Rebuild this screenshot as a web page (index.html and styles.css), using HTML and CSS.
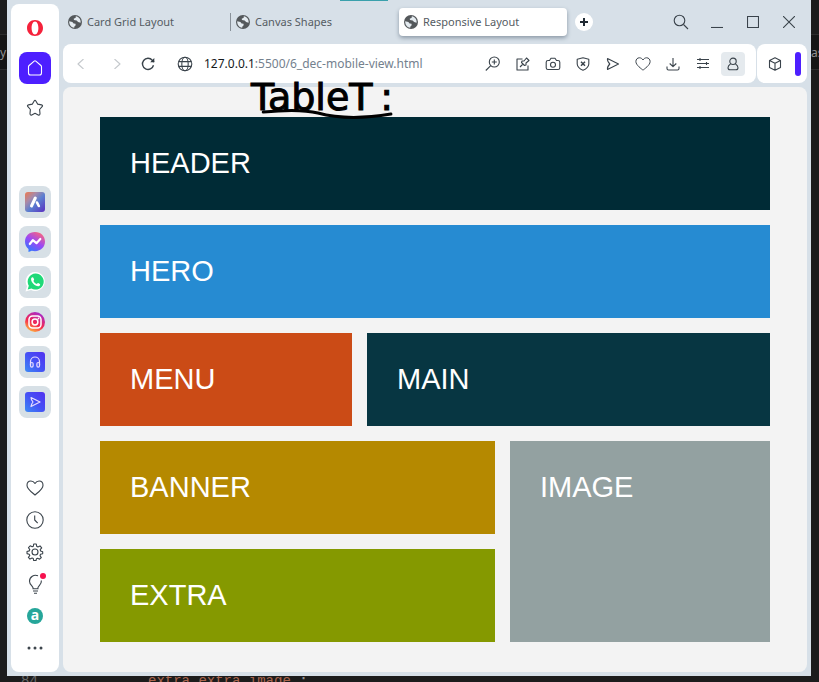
FILE: index.html
```html
<!DOCTYPE html>
<html lang="en">
<head>
<meta charset="utf-8">
<meta name="viewport" content="width=device-width, initial-scale=1">
<title>Responsive Layout</title>
<link rel="stylesheet" href="styles.css">
</head>
<body>
<svg class="defs" aria-hidden="true">
  <defs>
    <linearGradient id="g-aria" x1="0" y1="0" x2="1" y2="1"><stop offset="0" stop-color="#f0784a"/><stop offset=".3" stop-color="#a98aa8"/><stop offset=".55" stop-color="#5b7fd0"/><stop offset="1" stop-color="#5a2fc0"/></linearGradient>
    <linearGradient id="g-msg" x1=".2" y1="1" x2=".8" y2="0"><stop offset="0" stop-color="#2a7cff"/><stop offset=".5" stop-color="#9a48f5"/><stop offset="1" stop-color="#ff6678"/></linearGradient>
    <linearGradient id="g-ig" x1=".2" y1="1" x2=".7" y2="0"><stop offset="0" stop-color="#ffc23c"/><stop offset=".45" stop-color="#f4294f"/><stop offset="1" stop-color="#a42bd0"/></linearGradient>
    <linearGradient id="g-blue" x1="0" y1="1" x2="1" y2="0"><stop offset="0" stop-color="#3d8bf5"/><stop offset=".5" stop-color="#4550f5"/><stop offset="1" stop-color="#5230f0"/></linearGradient>
    <symbol id="earth" viewBox="0 0 14 14"><circle cx="7" cy="7" r="7" fill="#54585b"/><path d="M1.2 6.2 4.400 7l1.200 1.400 1.900.3.2 1.500-1.300 1.200-.2 1.400C3 12.300 1 9.500 1.200 6.200zM7.800 1.300l-.1 1.500-2 .9.300 1.300 2.600.4 1.500 1.700 2.500.7c.5-3.300-1.600-6-4.800-6.500z" fill="#e4ebf0"/></symbol>
    <symbol id="heart" viewBox="0 0 18 18"><path d="M9 16C7.500 14.400 1 10.500 1 6.200 1 3.800 2.700 2 4.900 2 6.600 2 8 2.900 9 4.500 10 2.900 11.400 2 13.100 2 15.300 2 17 3.800 17 6.200 17 10.500 10.500 14.400 9 16z"/></symbol>
    <symbol id="send" viewBox="0 0 14 14"><path d="M1.500 1.600 12.500 7 1.500 12.400Q1 10 3.800 7 1 4 1.500 1.600z"/></symbol>
  </defs>
</svg>

<div class="desktop">
  <div class="strip strip-left"><span class="code">y</span></div>

  <div class="window">
    <nav class="sidebar" aria-label="Sidebar">
      <button class="side" aria-label="Opera menu"><svg width="16" height="16" viewBox="0 0 16 16"><path fill="#f5223b" fill-rule="evenodd" d="M8 0C3.500 0 0 3.500 0 8s3.500 8 8 8 8-3.500 8-8-3.500-8-8-8zm0 1.500c2 0 3.400 2.900 3.400 6.500S10 14.500 8 14.500 4.600 11.600 4.600 8 6 1.500 8 1.500z"/></svg></button>
      <button class="side home" aria-label="Home"><svg class="line" width="16" height="16" viewBox="0 0 16 16"><path d="M1.500 6.800Q1.500 6 2.100 5.500L7.200 1.100Q8 .5 8.800 1.100l5.100 4.400q.6.500.6 1.300V13q0 2-2 2h-9q-2 0-2-2z"/></svg></button>
      <button class="side" aria-label="Pinboards"><svg class="line" width="18" height="18" viewBox="0 0 18 18"><path d="M8 2.200Q9 .4 10 2.200l1.600 2.900 3.900.8q1.800.4.6 1.800l-2.500 2.800.4 4.100q0 2-1.800 1.300L9 14.300l-3.200 1.600Q4 16.600 4 14.600l.4-4.100-2.500-2.800q-1.200-1.400.6-1.800l3.900-.8z"/></svg></button>

      <div class="apps">
        <button class="side app" aria-label="Aria"><svg width="20" height="20" viewBox="0 0 20 20"><rect width="20" height="20" rx="3" fill="url(#g-aria)"/><path d="m6.500 14 3.800-8" stroke="#fff" stroke-width="3" stroke-linecap="round"/><path d="m12 10.500 1.800 3.500" stroke="#fff" stroke-width="2.600" stroke-linecap="round"/></svg></button>
        <button class="side app" aria-label="Messenger"><svg width="20" height="20" viewBox="0 0 20 20"><path d="M10 0c6 0 10 4.200 10 9.600s-4 9.600-10 9.600q-2 0-3.200-.4L3.500 20V17C1.200 15.200 0 12.800 0 9.600 0 4.200 4 0 10 0z" fill="url(#g-msg)"/><path d="m4.800 12 3-3.800 3.700 3L15.300 7" fill="none" stroke="#fff" stroke-width="2.200" stroke-linejoin="round" stroke-linecap="round"/></svg></button>
        <button class="side app" aria-label="WhatsApp"><svg width="20" height="20" viewBox="0 0 20 20"><path d="M10.500 0A9.500 9.500 0 1 1 6 18L.5 19.500 2 14.200A9.500 9.500 0 0 1 10.500 0z" fill="#fff"/><path d="M10.500 1.600a8 8 0 1 1-4 14.800l-3.800 1 1.100-3.700A8 8 0 0 1 10.500 1.600z" fill="#1fd978"/><path d="M6.300 6c.8-1.200 1.900-1 2.200 0l.6 1.500c.2.700-.7 1-.7 1.500.8 1.500 2 2.500 3.300 3 .6-.3.800-1.300 1.500-1l1.700.9c.8.500-.2 2.100-1.400 2.300C10.500 14.500 5 10 6.300 6z" fill="#fff"/></svg></button>
        <button class="side app" aria-label="Instagram"><svg width="20" height="20" viewBox="0 0 20 20"><circle cx="10" cy="10" r="10" fill="url(#g-ig)"/><g fill="none" stroke="#fff" stroke-width="1.500"><rect x="4" y="4" width="12" height="12" rx="3.500"/><circle cx="10" cy="10" r="2.900"/></g><circle cx="13.500" cy="6.500" r=".9" fill="#fff"/></svg></button>
        <button class="side app" aria-label="Player"><svg width="20" height="20" viewBox="0 0 20 20"><rect width="20" height="20" rx="3" fill="url(#g-blue)"/><g fill="none" stroke="#e8dcff" stroke-width="1.200"><path d="M5.500 13V9.500a4.500 4.500 0 0 1 9 0V13"/><rect x="5.500" y="10.500" width="2.600" height="4.600" rx="1.300"/><rect x="11.900" y="10.500" width="2.600" height="4.600" rx="1.300"/></g></svg></button>
        <button class="side app" aria-label="My Flow"><svg width="20" height="20" viewBox="0 0 20 20"><rect width="20" height="20" rx="3" fill="url(#g-blue)"/><path d="M6 5.500 15 10l-9 4.500Q6 12.500 8 10 6 7.500 6 5.500z" fill="none" stroke="#e8dcff" stroke-width="1.200" stroke-linejoin="round"/></svg></button>
      </div>

      <div class="tools">
        <button class="side small" aria-label="Favourites"><svg class="line" width="18" height="18"><use href="#heart"/></svg></button>
        <button class="side small" aria-label="History"><svg class="line" width="18" height="18" viewBox="0 0 18 18"><circle cx="9" cy="9" r="8.200"/><path d="M8.700 4.500V9l3 3.200"/></svg></button>
        <button class="side small" aria-label="Settings"><svg class="line" width="18" height="18" viewBox="0 0 18 18"><circle cx="9" cy="9" r="3"/><path d="M7.300 3.300 7.700 1h2.600l.4 2.300 1.200.6 2.100-1 1.700 2-1.500 1.800.4 1.300 2.100.7v2l-2.200.6-.5 1.300 1.300 1.900-1.700 1.700-1.900-1-1.200.5-.5 1.900H7.700l-.4-2-1.200-.5-2.100 1-1.600-1.800 1.400-1.800-.6-1.300L1 10.600V8.500l2.200-.6.600-1.300-1.300-1.900 1.700-1.900 2 1z"/></svg></button>
        <button class="side small" aria-label="Tips"><svg class="line tip" width="20" height="20" viewBox="0 0 20 20"><path d="M8.200 14.500C8.200 12 4.500 11 4.500 7.200A6 6 0 0 1 13 1.800M16.400 6.500c.4 4.500-3.600 5.400-3.600 8M7.500 14.700h6M8 17h5M9 19.300h3"/><circle cx="18" cy="2" r="3" fill="#f6124f" stroke="none"/></svg></button>
        <button class="side small" aria-label="Alibaba"><span class="badge">a</span></button>
        <button class="side small" aria-label="More"><svg width="18" height="4" viewBox="0 0 18 4"><g fill="#3d454c"><circle cx="3" cy="2" r="1.500"/><circle cx="9" cy="2" r="1.500"/><circle cx="15" cy="2" r="1.500"/></g></svg></button>
      </div>
    </nav>

    <div class="browser">
      <div class="tabs">
        <button class="tab divided"><svg width="14" height="14"><use href="#earth"/></svg>Card Grid Layout</button>
        <button class="tab"><svg width="14" height="14"><use href="#earth"/></svg>Canvas Shapes</button>
        <button class="tab active"><svg width="14" height="14"><use href="#earth"/></svg>Responsive Layout</button>
        <button class="new-tab" aria-label="New tab"><svg width="8" height="8" viewBox="0 0 8 8"><path d="M4 0v8M0 4h8" stroke="#202a33" stroke-width="2"/></svg></button>
        <div class="controls">
          <button aria-label="Search tabs"><svg class="line" width="16" height="16" viewBox="0 0 16 16"><circle cx="6.500" cy="6.500" r="5.300"/><path d="m10.500 10.500 4.500 4.500"/></svg></button>
          <button class="minimize" aria-label="Minimize"><svg class="line" width="12" height="12" viewBox="0 0 12 12"><path d="M0 11.500h12"/></svg></button>
          <button aria-label="Maximize"><svg class="line" width="12" height="12" viewBox="0 0 12 12"><path d="M.5.500h11v11H.5z"/></svg></button>
          <button aria-label="Close"><svg class="line" width="12" height="12" viewBox="0 0 12 12"><path d="m0 0 12 12M12 0 0 12"/></svg></button>
        </div>
      </div>

      <div class="bars">
        <div class="address">
          <button class="nav faint" aria-label="Back"><svg class="line" width="8" height="10" viewBox="0 0 8 10"><path d="M6.500 0 1 5l5.500 5"/></svg></button>
          <button class="nav faint" aria-label="Forward"><svg class="line" width="8" height="10" viewBox="0 0 8 10"><path d="m1.500 0 5.500 5-5.500 5"/></svg></button>
          <button class="reload" aria-label="Reload"><svg class="line" width="14" height="14" viewBox="0 0 14 14"><path stroke-width="1.400" d="M12.500 8.300A5.600 5.600 0 1 1 11.300 3.200L13 5"/><path d="M13.300 1v4.300H9.200z" fill="#303940" stroke="none"/></svg></button>
          <svg class="line site" role="img" aria-label="Site information" width="16" height="16" viewBox="0 0 16 16"><circle cx="8" cy="8" r="6.800"/><ellipse cx="8" cy="8" rx="3.200" ry="6.800"/><path d="M1.800 5.600h12.400M1.800 10.400h12.400"/></svg>
          <a class="url" href="#page"><span>127.0.0.1</span>:5500/6_dec-mobile-view.html</a>
          <div class="actions">
            <button aria-label="Zoom"><svg class="line" width="16" height="16" viewBox="0 0 16 16"><circle cx="9.300" cy="6" r="5"/><path d="M5.700 9.700.8 14.500M9.300 3.500v5M6.800 6h5"/></svg></button>
            <button aria-label="Pin page"><svg class="line" width="14" height="14" viewBox="0 0 14 14"><path d="M6.500 2H1v11h11V8.500M4 10l3-3M5.500 5.500l3 3L10 8V6l3-2.500L10.500 1 8 4H6z"/></svg></button>
            <button aria-label="Snapshot"><svg class="line" width="16" height="14" viewBox="0 0 16 14"><path d="M3 3.500h1.500L6 1.200h4l1.500 2.300H13q1.800 0 1.800 1.800v5.400q0 1.800-1.800 1.800H3q-1.800 0-1.800-1.800V5.300Q1.200 3.500 3 3.500z"/><circle cx="8" cy="7.800" r="2.500"/></svg></button>
            <button aria-label="Ad blocker"><svg class="line" width="14" height="14" viewBox="0 0 14 14"><path d="M7 .8 12.800 2.200V7Q12.500 11 7 13.300 1.500 11 1.200 7V2.200z"/><path stroke-width="1.500" d="m5 4.700 4 4M9 4.700l-4 4"/></svg></button>
            <button aria-label="Send to My Flow"><svg class="line" width="14" height="14"><use href="#send"/></svg></button>
            <button aria-label="Bookmark"><svg class="line" width="16" height="16"><use href="#heart"/></svg></button>
            <button aria-label="Downloads"><svg class="line" width="14" height="14" viewBox="0 0 14 14"><path d="M7 1v8.500M3.700 6.500 7 9.700l3.300-3.200M1 9.500v2Q1 13 2.500 13h9q1.500 0 1.500-1.500v-2"/></svg></button>
            <button aria-label="Easy setup"><svg class="line" width="14" height="12" viewBox="0 0 14 12"><path d="M1 1.500h12M1 5.500h12M1 9.500h12M4 0v3M10.500 4v3M4 8v3"/></svg></button>
            <button aria-label="Account"><span class="account"><svg class="line" width="12" height="14" viewBox="0 0 12 14"><circle cx="6" cy="4.300" r="3.200"/><path d="M3.500 7Q1 8.500 1 10.800 1 12.800 3 12.800h6q2 0 2-2Q11 8.500 8.500 7"/></svg></span></button>
          </div>
        </div>
        <div class="extras">
          <button aria-label="Extensions"><svg class="line" width="14" height="14" viewBox="0 0 14 14"><path d="M7 .8 12.500 3.500v7L7 13.200 1.500 10.500v-7zM1.500 3.500 7 6.300l5.500-2.800M7 6.300v6.900"/></svg></button>
          <span class="marker"></span>
        </div>
      </div>

      <main class="page" id="page">
        <div class="note"><span>TableT</span><span>:</span>
          <svg class="swash" viewBox="0 0 140 12" fill="none" stroke="#000" stroke-width="3" stroke-linecap="round"><path d="M12 4C32 2 50 1 66 5 88 11 114 10 138 6"/></svg>
        </div>
        <div class="layout">
          <header class="cell header">HEADER</header>
          <section class="cell hero">HERO</section>
          <nav class="cell menu">MENU</nav>
          <section class="cell content">MAIN</section>
          <section class="cell banner">BANNER</section>
          <section class="cell image">IMAGE</section>
          <section class="cell extra">EXTRA</section>
        </div>
      </main>
    </div>
    <span class="progress"></span>
  </div>

  <div class="strip strip-right"><span class="code">as</span></div>
  <div class="strip strip-bottom"><span class="line-number">84</span><span class="source">extra extra image<b>&nbsp;;</b></span></div>
</div>
</body>
</html>
```
FILE: styles.css
```css
* { box-sizing: border-box; }

body {
  margin: 0;
  background: #1c1c1c;
  font-family: "Noto Sans", sans-serif;
  color: #303940;
}

button {
  display: flex;
  align-items: center;
  justify-content: center;
  flex: none;
  margin: 0;
  padding: 0;
  border: 0;
  background: none;
  color: inherit;
  font: inherit;
}

svg { display: block; flex: none; }
.defs { position: absolute; width: 0; height: 0; }

.line {
  fill: none;
  stroke: #3a434b;
  stroke-width: 1.1;
  stroke-linejoin: round;
}

/* Desktop and the editor showing behind the window */
.desktop {
  display: grid;
  grid-template-columns: 7px minmax(0, 1fr) 8px;
  grid-template-rows: 1fr 6px;
  min-height: 100vh;
}

.strip { overflow: hidden; }

.strip-left,
.strip-right {
  padding-top: 34px;
  background: #1c1c1c;
}

.code {
  display: block;
  height: 36px;
  border-top: 1px solid #2c2c2c;
  border-bottom: 1px solid #2c2c2c;
  background: #151515;
  font-size: 12px;
  line-height: 36px;
  color: #929292;
}

.strip-bottom {
  display: flex;
  grid-column: 1 / -1;
  height: 6px;
  padding-left: 21px;
  font-family: "Liberation Mono", monospace;
  font-size: 14px;
  line-height: 10px;
  color: #686868;
}

.line-number { width: 127px; }
.source { color: #a9644c; }
.source b { color: #929292; }

/* Browser window */
.window {
  position: relative;
  display: flex;
  gap: 4px;
  padding: 0 4px 4px;
  background: #d7e0e8;
}

.progress {
  position: absolute;
  top: 0;
  left: 333px;
  width: 48px;
  height: 1px;
  background: #3aa0ac;
}

.sidebar {
  display: flex;
  flex: none;
  flex-direction: column;
  align-items: center;
  gap: 8px;
  width: 48px;
  margin-top: 4px;
  padding: 8px 0 12px;
  border-radius: 8px;
  background: #fff;
}

.side {
  width: 32px;
  height: 32px;
  border-radius: 8px;
}

.home { background: #4d1fff; }
.home .line { stroke: #fff; }
.app { background: #d7e0e6; }
.small { height: 24px; }
.tip { overflow: visible; }

.apps,
.tools {
  display: flex;
  flex-direction: column;
  gap: 8px;
}

.apps { margin-top: 54px; }
.tools { margin-top: auto; }

.badge {
  width: 16px;
  height: 16px;
  border-radius: 50%;
  background: #26a69a;
  color: #fff;
  font-size: 14px;
  font-weight: 700;
  line-height: 14px;
}

.browser {
  display: flex;
  flex: 1;
  flex-direction: column;
  min-width: 0;
}

.tabs {
  display: flex;
  align-items: center;
  height: 44px;
}

.tab {
  display: flex;
  flex: 0 1 168px;
  justify-content: flex-start;
  gap: 5px;
  min-width: 0;
  height: 28px;
  padding: 0 5px;
  font-size: 11px;
  line-height: 28px;
  color: #555c63;
  white-space: nowrap;
}

.divided {
  height: 18px;
  border-right: 1px solid #899199;
}

.active {
  border-radius: 4px;
  background: #fff;
  box-shadow: 0 2px 4px #8b98a6;
}

.new-tab {
  width: 18px;
  height: 18px;
  margin-left: 8px;
  border-radius: 50%;
  background: #fff;
}

.controls {
  display: flex;
  margin-left: auto;
}

.controls button {
  width: 36px;
  height: 28px;
}

.bars {
  display: flex;
  gap: 1px;
  height: 39px;
}

.address,
.extras {
  display: flex;
  align-items: center;
  border-radius: 8px;
  background: #fff;
}

.address {
  flex: 1;
  min-width: 0;
  padding-right: 8px;
}

.nav { width: 36px; }
.faint .line { stroke: #c4c8cc; }
.reload { width: 26px; }
.site { margin: 0 11px 0 16px; }

.url {
  font-size: 12px;
  line-height: 20px;
  color: #74818e;
  text-decoration: none;
  white-space: nowrap;
}

.url span { color: #15191d; }

.actions {
  display: flex;
  margin-left: auto;
}

.actions button {
  width: 30px;
  height: 24px;
}

.account {
  display: flex;
  align-items: center;
  justify-content: center;
  width: 24px;
  height: 24px;
  border-radius: 4px;
  background: #e5eaee;
}

.extras {
  flex: none;
  justify-content: space-between;
  width: 50px;
  padding: 0 6px 0 3px;
}

.extras button { width: 30px; }

.marker {
  width: 6px;
  height: 24px;
  border-radius: 3px;
  background: #4d1fff;
}

/* Page inside the browser */
.page {
  position: relative;
  flex: 1;
  margin-top: 4px;
  padding: 30px 37px;
  border-radius: 8px;
  background: #f3f3f3;
}

.note {
  position: absolute;
  top: -7px;
  left: 188px;
  display: flex;
  justify-content: space-between;
  width: 142px;
  font-family: "DejaVu Sans", sans-serif;
  font-size: 38px;
  line-height: 34px;
  color: #000;
  -webkit-text-stroke: 1px #000;
}

.swash {
  position: absolute;
  bottom: -6px;
  left: 0;
  width: 100%;
}

.layout {
  display: grid;
  grid-template-columns: 252fr 128fr 260fr;
  gap: 15px;
  font-family: "Liberation Sans", sans-serif;
  font-size: 29px;
  line-height: 33px;
  color: #fff;
}

.cell { padding: 30px; }
.header { grid-column: 1 / -1; background: #002b36; }
.hero { grid-column: 1 / -1; background: #268bd2; }
.menu { background: #cb4b16; }
.content { grid-column: 2 / -1; background: #073642; }
.banner { grid-column: 1 / 3; background: #b58900; }
.image { grid-row: 4 / 6; grid-column: 3; background: #93a1a1; }
.extra { grid-column: 1 / 3; background: #859900; }
```
